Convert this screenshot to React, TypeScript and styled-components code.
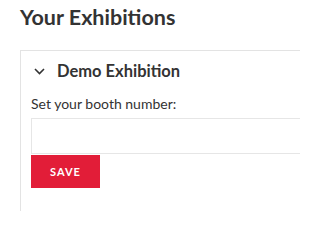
import React from 'react';
import styled, {createGlobalStyle} from 'styled-components';

const GlobalStyle = createGlobalStyle`
	html, body {
		margin: 0;
		padding: 0;
		background: #fff;
		width: 300px;
		height: 211px;
		overflow: hidden;
	}
	body {
		font-family: Lato, "Liberation Sans", sans-serif;
		color: #333;
	}
`;

const Page = styled.div`
	padding: 4px 0 0 20px;
	width: 320px;
`;

const Title = styled.h1`
	font-size: 21.5px;
	font-weight: 700;
	color: #333;
	margin: 0 0 20px;
	line-height: 26px;
`;

const Card = styled.section`
	border: 1px solid #e3e3e3;
	border-right: none;
	padding: 10px 0 30px 10px;
`;

const CardHeader = styled.div`
	display: flex;
	align-items: center;
	gap: 12px;
	padding-left: 3px;
	height: 20px;
`;

const CardTitle = styled.h2`
	font-size: 16.5px;
	font-weight: 700;
	color: #333;
	margin: 0;
	line-height: 20px;
`;

const Label = styled.label`
	display: block;
	font-size: 14px;
	color: #333;
	margin-top: 13px;
	line-height: 20px;
`;

const Input = styled.input`
	display: block;
	box-sizing: border-box;
	width: 100%;
	height: 36px;
	margin-top: 4px;
	border: 1px solid #e6e6e6;
	border-right: none;
	outline: none;
	font-family: inherit;
	font-size: 14px;
`;

const SaveButton = styled.button`
	display: block;
	width: 69px;
	height: 33px;
	margin-top: 1px;
	border: none;
	background: #e21d38;
	color: #fff;
	font-family: inherit;
	font-size: 11px;
	font-weight: 700;
	letter-spacing: 1px;
	padding: 0;
`;

const Chevron = () =>
	<svg width="11" height="7" viewBox="0 0 11 7" fill="none">
		<path d="M1 1l4.5 4.5L10 1" stroke="#333" strokeWidth="1.6" />
	</svg>;

const App = () =>
	<>
		<GlobalStyle />
		<Page>
			<Title>Your Exhibitions</Title>
			<Card>
				<CardHeader>
					<Chevron />
					<CardTitle>Demo Exhibition</CardTitle>
				</CardHeader>
				<Label htmlFor="booth">Set your booth number:</Label>
				<Input id="booth" />
				<SaveButton>SAVE</SaveButton>
			</Card>
		</Page>
	</>;

export default App;
